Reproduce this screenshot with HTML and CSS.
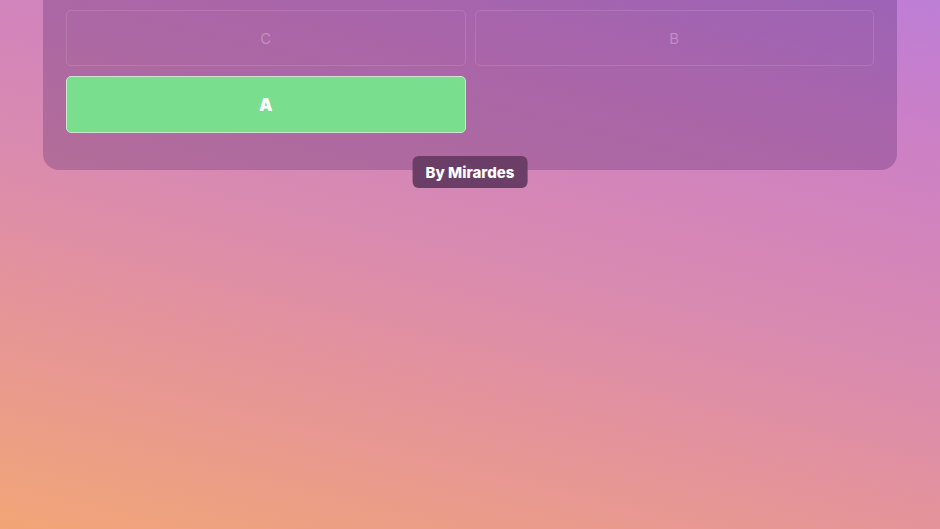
FILE: index.html
```html
<!DOCTYPE html>
<html lang="en">
<head>
<meta charset="utf-8">
<title>Quiz</title>
<link rel="stylesheet" href="styles.css">
</head>
<body>
<main class="page">
  <section class="card">
    <div class="answers">
      <button class="answer">C</button>
      <button class="answer">B</button>
      <button class="answer correct">A</button>
    </div>
    <div class="credit">By Mirardes</div>
  </section>
</main>
</body>
</html>
```
FILE: styles.css
```css
html, body {
  margin: 0;
  height: 100%;
}
body {
  background: linear-gradient(14deg, #f2a676 0%, #e4939b 32%, #d98ab0 52%, #cd80c4 80%, #bd7ed6 100%);
  font-family: Inter, "Noto Sans", sans-serif;
  overflow: hidden;
}
.page {
  padding: 0 43px;
  margin-top: -23px;
}
.card {
  position: relative;
  background: rgba(60, 20, 90, 0.25);
  border-radius: 0 0 16px 16px;
  padding: 33px 23px 37px;
}
.answers {
  display: grid;
  grid-template-columns: 1fr 1fr;
  column-gap: 9px;
  row-gap: 10px;
}
.answer {
  height: 56px;
  border: 1px solid rgba(255, 255, 255, 0.12);
  border-radius: 5px;
  background: transparent;
  color: rgba(255, 255, 255, 0.28);
  font-family: Inter, "Noto Sans", sans-serif;
  font-size: 15px;
  font-weight: 400;
}
.answer.correct {
  height: 57px;
  background: #79de8e;
  border-color: #c9e6cc;
  color: #ffffff;
  font-size: 17px;
  font-weight: 900;
}
.credit {
  position: absolute;
  left: 50%;
  bottom: -18px;
  transform: translateX(-50%);
  height: 32px;
  padding: 0 13px;
  display: flex;
  align-items: center;
  background: #6a3e66;
  border-radius: 6px;
  color: #ffffff;
  font-size: 15px;
  font-weight: 800;
  letter-spacing: 0;
  white-space: nowrap;
}
```
